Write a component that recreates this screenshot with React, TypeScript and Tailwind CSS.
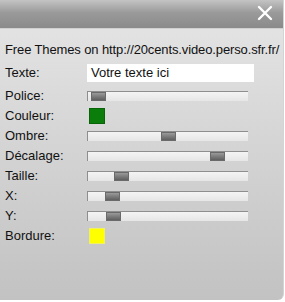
import React from 'react';

interface SliderRowProps {
  label: string;
  thumb: number;
}

function Slider({ thumb }: { thumb: number }) {
  return (
    <div className="relative w-[161px] h-[10px] border-t border-l border-[#8e8e8e] bg-gradient-to-b from-[#f4f4f4] to-[#e6e6e6]">
      {/* thumb */}
      <div
        className="absolute top-0 h-[9px] w-[15px] bg-gradient-to-b from-[#9a9a9a] to-[#5f5f5f] border border-[#6a6a6a]"
        style={{ left: thumb }}
      />
    </div>
  );
}

function SliderRow({ label, thumb }: SliderRowProps) {
  return (
    <div className="flex items-center h-5">
      <span className="w-[82px] shrink-0">{label}</span>
      <Slider thumb={thumb} />
    </div>
  );
}

function ColorRow({ label, color }: { label: string; color: string }) {
  return (
    <div className="flex items-center h-5">
      <span className="w-[84px] shrink-0">{label}</span>
      <div className={`w-4 h-4 ${color}`} />
    </div>
  );
}

export default function App() {
  return (
    <div className="w-[285px] h-[302px] bg-white">
      <div className="w-[284px] h-[300px] rounded-br-[6px] overflow-hidden flex flex-col border-r border-[#d4d4d4] bg-gradient-to-b from-[#e6e6e6] to-[#c2c2c2] font-['Liberation_Sans',Arial,sans-serif] text-[13px] text-[#111]">
        {/* Header */}
        <div className="h-[29px] shrink-0 flex justify-end items-start bg-gradient-to-b from-[#c4c4c4] via-[#9a9a9a] via-45% to-[#8a8a8a] border-b border-[#d0d0d0]">
          <svg width="16" height="16" viewBox="0 0 16 16" className="mt-[5px] mr-[10px]">
            <path d="M2 2 L14 14 M14 2 L2 14" stroke="#fff" strokeWidth="2.4" strokeLinecap="round" />
          </svg>
        </div>

        {/* Body */}
        <div className="flex flex-col pl-[5px] pt-[11px]">
          <div className="flex items-center h-5 whitespace-nowrap tracking-[-0.12px]">Free Themes on http://20cents.video.perso.sfr.fr/</div>
          <div className="flex items-center h-[25px]">
            <span className="w-[82px] shrink-0">Texte:</span>
            <div className="w-[167px] h-[18px] bg-white flex items-center pl-[4px]">Votre texte ici</div>
          </div>
          <div className="flex items-center h-[21px]">
            <span className="w-[82px] shrink-0">Police:</span>
            <Slider thumb={3} />
          </div>
          <ColorRow label="Couleur:" color="bg-[#0b7d0b] border border-[#096409]" />
          <SliderRow label="Ombre:" thumb={73} />
          <SliderRow label="Décalage:" thumb={122} />
          <SliderRow label="Taille:" thumb={26} />
          <SliderRow label="X:" thumb={17} />
          <SliderRow label="Y:" thumb={18} />
          <ColorRow label="Bordure:" color="bg-[#ffff00] border border-[#f0f060]" />
        </div>
      </div>
    </div>
  );
}
